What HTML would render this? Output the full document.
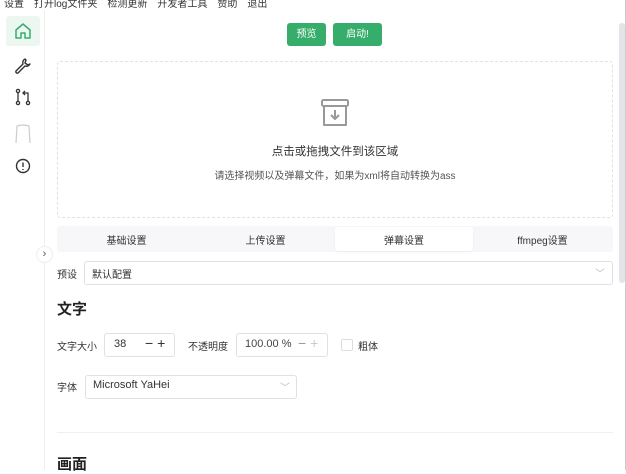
<!DOCTYPE html><html><head><meta charset="utf-8"><style>
*{box-sizing:border-box;margin:0;padding:0}
body{width:626px;height:470px;overflow:hidden;background:#fff;font-family:"Liberation Sans","Noto Sans CJK SC",sans-serif;color:#333;font-size:10px;position:relative}
.a{position:absolute}
.menu{top:-5px;left:4px;font-size:10px;color:#333;white-space:nowrap}
.menu span{margin-right:10px}
.side{left:0;top:10px;width:45px;height:460px;border-right:1px solid #eee}
.btn{background:#36ad6a;color:#fff;border-radius:3px;height:23px;line-height:23px;text-align:center;font-size:10px}
.box{border:1px solid #e0e0e6;border-radius:3px;background:#fff}
.lbl{font-size:10px;color:#333}
</style></head><body>
<div class="a menu"><span>设置</span><span>打开log文件夹</span><span>检测更新</span><span>开发者工具</span><span>赞助</span><span>退出</span></div>
<div class="a side"></div>
<div class="a" style="left:6px;top:16px;width:34px;height:30px;background:#edf7f1;border-radius:3px"></div>
<svg class="a" style="left:13px;top:21px" width="20" height="20" viewBox="0 0 20 20" fill="none" stroke="#36ad6a" stroke-width="1.5" stroke-linejoin="round"><path d="M3 9 L10 3 L17 9 V17 H12 V12 H8 V17 H3 Z"/></svg>
<svg class="a" style="left:14px;top:57px" width="18" height="18" viewBox="0 0 18 18" fill="none" stroke="#333" stroke-width="1.4" stroke-linejoin="round"><path d="M11 2 a4 4 0 0 0 -2 5 L2 14 a1.5 1.5 0 0 0 2 2 L11 9 a4 4 0 0 0 5 -2 L14 8 L11 6 L12 3 Z"/></svg>
<svg class="a" style="left:14px;top:88px" width="18" height="18" viewBox="0 0 18 18" fill="none" stroke="#333" stroke-width="1.3"><circle cx="4" cy="3" r="1.6"/><circle cx="4" cy="15" r="1.6"/><circle cx="14" cy="15" r="1.6"/><path d="M4 5 V13 M14 13 V5 H10 M11 3 L9 5 L11 7"/></svg>
<svg class="a" style="left:13px;top:123px" width="20" height="22" viewBox="0 0 20 22" fill="none" stroke="#ccc" stroke-width="1.2"><path d="M3 20 L4 3 Q10 1 16 3 L17 20"/></svg>
<svg class="a" style="left:15px;top:158px" width="16" height="16" viewBox="0 0 16 16" fill="none" stroke="#333" stroke-width="1.4"><circle cx="8" cy="8" r="6.5"/><path d="M8 4.5 V9 M8 11 V12"/></svg>
<div class="a btn" style="left:287px;top:23px;width:39px">预览</div>
<div class="a btn" style="left:333px;top:23px;width:49px">启动!</div>
<div class="a" style="left:57px;top:61px;width:556px;height:157px;border:1px dashed #e0e0e6;border-radius:3px"></div>
<svg class="a" style="left:320px;top:98px" width="30" height="30" viewBox="0 0 30 30" fill="none" stroke="#999" stroke-width="2" stroke-linejoin="round"><rect x="2" y="2" width="26" height="6" rx="1.5"/><path d="M4 8 V27 H26 V8 M15 12 V21 M11 17 L15 21 L19 17"/></svg>
<div class="a" style="left:57px;top:143px;width:556px;text-align:center;font-size:11.5px;color:#333">点击或拖拽文件到该区域</div>
<div class="a" style="left:57px;top:167px;width:556px;text-align:center;font-size:10px;color:#555">请选择视频以及弹幕文件，如果为xml将自动转换为ass</div>
<div class="a" style="left:57px;top:226px;width:556px;height:26px;background:#f7f7fa;border-radius:3px"></div>
<div class="a" style="left:335px;top:227px;width:138px;height:24px;background:#fff;border-radius:3px;box-shadow:0 1px 2px rgba(0,0,0,.06)"></div>
<div class="a lbl" style="left:57px;top:232px;width:139px;text-align:center">基础设置</div>
<div class="a lbl" style="left:196px;top:232px;width:139px;text-align:center">上传设置</div>
<div class="a lbl" style="left:335px;top:232px;width:138px;text-align:center">弹幕设置</div>
<div class="a lbl" style="left:473px;top:232px;width:139px;text-align:center">ffmpeg设置</div>
<div class="a" style="left:36px;top:246px;width:17px;height:17px;border-radius:50%;background:#fff;border:1px solid #eee;font-size:11px;text-align:center;line-height:14px;color:#555">›</div>
<div class="a lbl" style="left:57px;top:266px">预设</div>
<div class="a box" style="left:84px;top:261px;width:529px;height:24px"></div>
<div class="a lbl" style="left:92px;top:266px">默认配置</div>
<div class="a" style="left:595px;top:265px;color:#bbb;font-size:10px">﹀</div>
<div class="a" style="left:57px;top:298px;font-size:15px;font-weight:bold;color:#222">文字</div>
<div class="a lbl" style="left:57px;top:338px">文字大小</div>
<div class="a box" style="left:104px;top:333px;width:71px;height:24px"></div>
<div class="a lbl" style="left:114px;top:338px;font-size:11px">38</div>
<div class="a" style="left:145px;top:335px;font-size:14px;color:#333">− +</div>
<div class="a lbl" style="left:188px;top:338px">不透明度</div>
<div class="a box" style="left:236px;top:333px;width:92px;height:24px"></div>
<div class="a lbl" style="left:245px;top:338px;color:#444;font-size:11px">100.00 %</div>
<div class="a" style="left:298px;top:335px;font-size:14px;color:#999">− <span style="color:#ccc">+</span></div>
<div class="a" style="left:341px;top:339px;width:12px;height:12px;border:1px solid #ddd;border-radius:2px"></div>
<div class="a lbl" style="left:358px;top:338px">粗体</div>
<div class="a lbl" style="left:57px;top:379px">字体</div>
<div class="a box" style="left:85px;top:375px;width:212px;height:24px"></div>
<div class="a" style="left:93px;top:379px;font-size:11px;color:#333">Microsoft YaHei</div>
<div class="a" style="left:280px;top:379px;color:#bbb;font-size:10px">﹀</div>
<div class="a" style="left:57px;top:432px;width:556px;height:1px;background:#efeff5"></div>
<div class="a" style="left:57px;top:453px;font-size:15px;font-weight:bold;color:#222">画面</div>
<div class="a" style="left:619px;top:23px;width:6px;height:260px;background:#e3e3e8;border-radius:3px"></div>
<div class="a" style="left:625px;top:0;width:1px;height:470px;background:#ccc"></div>
</body></html>
